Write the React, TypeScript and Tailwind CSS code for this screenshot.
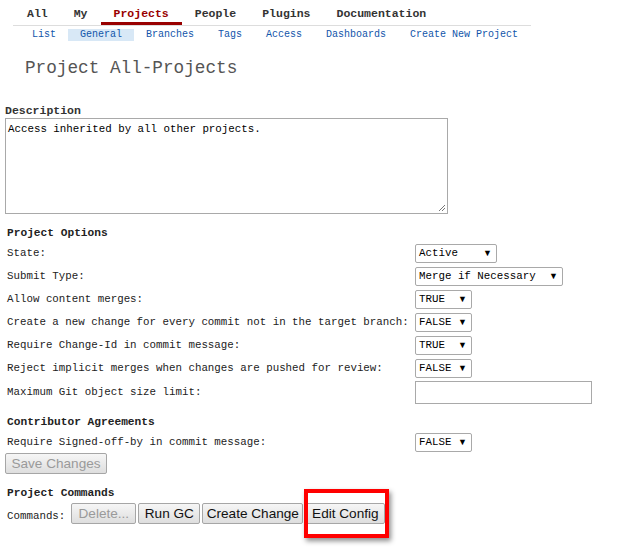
import React from 'react';

const mono = "font-['Liberation_Mono','DejaVu_Sans_Mono',monospace]";
const sans = "font-['Liberation_Sans',Arial,sans-serif]";

const topTabs = ['All', 'My', 'Projects', 'People', 'Plugins', 'Documentation'];
const subTabs = ['List', 'General', 'Branches', 'Tags', 'Access', 'Dashboards', 'Create New Project'];

interface Option {
  label: string;
  value?: string;
  width?: number;
  input?: boolean;
}

const projectOptions: Option[] = [
  { label: 'State:', value: 'Active', width: 82 },
  { label: 'Submit Type:', value: 'Merge if Necessary', width: 148 },
  { label: 'Allow content merges:', value: 'TRUE', width: 57 },
  { label: 'Create a new change for every commit not in the target branch:', value: 'FALSE', width: 57 },
  { label: 'Require Change-Id in commit message:', value: 'TRUE', width: 57 },
  { label: 'Reject implicit merges when changes are pushed for review:', value: 'FALSE', width: 57 },
  { label: 'Maximum Git object size limit:', input: true },
];

function FakeSelect({ value, width }: { value: string; width: number }) {
  return (
    <div
      className={`flex h-[19px] items-center justify-between rounded-[2px] border border-[#a9a9a9] bg-white pl-[3px] pr-[4px] text-[10.8px] text-black ${mono}`}
      style={{ width }}
    >
      <span>{value}</span>
      <span className={`text-[9px] leading-none ${sans}`}>▼</span>
    </div>
  );
}

function Button({ children, disabled, width }: { children: React.ReactNode; disabled?: boolean; width: number }) {
  return (
    <button
      className={`block h-[21px] whitespace-nowrap rounded-[2px] border border-[#a6a6a6] bg-gradient-to-b from-[#f6f6f6] to-[#dedede] p-0 text-center text-[13.6px] leading-[18px] ${sans} ${
        disabled ? 'text-[#9a9a9a]' : 'text-[#111]'
      }`}
      style={{ width }}
    >
      {children}
    </button>
  );
}

function OptionRow({ opt }: { opt: Option }) {
  return (
    <div className={`grid grid-cols-[410px_auto] items-center ${opt.input ? 'h-[25px]' : 'h-[23px]'}`}>
      <span className="pl-[2px] text-[10.8px] text-[#222]">{opt.label}</span>
      {opt.input ? (
        <div className="h-[23px] w-[177px] border border-[#a9a9a9] bg-white" />
      ) : (
        <FakeSelect value={opt.value!} width={opt.width!} />
      )}
    </div>
  );
}

export default function App() {
  return (
    <div className={`h-[555px] w-[626px] overflow-hidden bg-white ${mono}`}>
      {/* top navigation */}
      <div className="ml-[13px] flex h-[26px] w-[518px] border-b border-[#dddddd] pl-[1px]">
        {topTabs.map((t) => (
          <div
            key={t}
            className={`h-[25px] px-[13px] pt-[6px] text-[11.5px] font-bold leading-[16px] ${
              t === 'Projects' ? 'border-b-[3px] border-[#990000] text-[#990000]' : 'text-[#333]'
            }`}
          >
            {t}
          </div>
        ))}
      </div>

      {/* sub navigation */}
      <div className="ml-[20px] mt-[3px] flex h-[12px]">
        {subTabs.map((t) => (
          <div
            key={t}
            className={`px-[12px] text-[10px] leading-[12px] text-[#1155aa] ${t === 'General' ? 'bg-[#d8e8f6]' : ''}`}
          >
            {t}
          </div>
        ))}
      </div>

      <h1 className="ml-[25px] mt-[16px] text-[17.7px] font-normal leading-[22px] text-[#555]">Project All-Projects</h1>

      <div className="px-[5px]">
        <div className="mt-[25px] text-[11.5px] font-bold leading-[14px] text-[#333]">Description</div>
        <div className="relative h-[96px] w-[443px] border border-[#a9a9a9] pl-[2px] pt-[3px] text-[10.8px] leading-[14px] text-black">
          Access inherited by all other projects.
          <svg className="absolute bottom-[1px] right-[1px]" width="8" height="8" viewBox="0 0 8 8">
            <path d="M7 1 L1 7 M7 4 L4 7" stroke="#777" strokeWidth="1" />
          </svg>
        </div>

        <div className="mt-[12px] pl-[2px] text-[11.2px] font-bold leading-[14px] text-[#222]">Project Options</div>
        <div className="mt-[2px]">
          {projectOptions.map((o) => (
            <OptionRow key={o.label} opt={o} />
          ))}
        </div>

        <div className="mt-[10px] pl-[2px] text-[11.2px] font-bold leading-[14px] text-[#222]">Contributor Agreements</div>
        <div className="mt-[2px]">
          <OptionRow opt={{ label: 'Require Signed-off-by in commit message:', value: 'FALSE', width: 57 }} />
        </div>
        <div className="-mt-[1px] h-[21px]">
          <Button disabled width={102}>Save Changes</Button>
        </div>

        <div className="mt-[12px] pl-[2px] text-[11.2px] font-bold leading-[14px] text-[#222]">Project Commands</div>
        <div className="mt-[3px] flex items-end">
          <span className="mb-[1px] pl-[2px] pr-[6px] text-[10.8px] leading-[14px] text-[#222]">Commands:</span>
          <div className="flex gap-[2px]">
            <Button disabled width={65}>Delete...</Button>
            <Button width={62}>Run GC</Button>
            <Button width={101}>Create Change</Button>
            <div className="relative flex">
              <Button width={80}>Edit Config</Button>
              <div className="pointer-events-none absolute bottom-[-14px] left-[-1px] right-[-4px] top-[-14px] border-[4px] border-[#ff0000] shadow-[2px_3px_5px_rgba(0,0,0,0.45)]" />
            </div>
          </div>
        </div>
      </div>
    </div>
  );
}
